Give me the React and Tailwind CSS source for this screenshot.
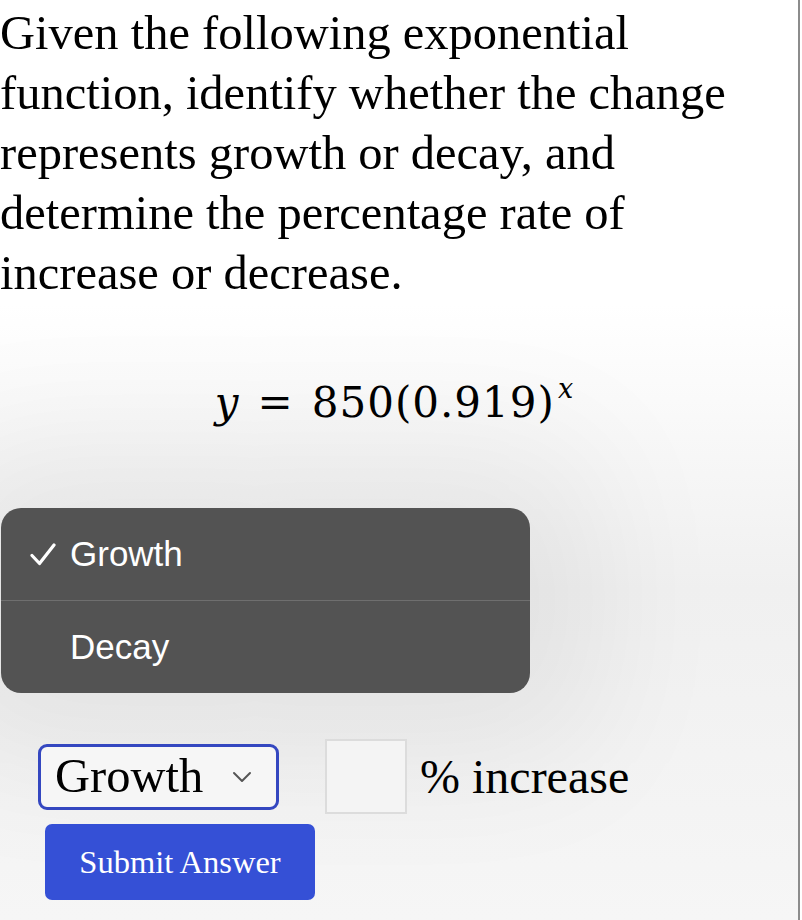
import React, { useState } from "react";

const serif = { fontFamily: '"Liberation Serif", "Times New Roman", serif' };
const math = { fontFamily: '"DejaVu Serif", "Liberation Serif", serif' };

const Check = () => (
    <svg width="26" height="23" viewBox="0 0 26 23" fill="none">
        <path
            d="M2 12.5 L9.5 20.5 L24 2"
            stroke="white"
            strokeWidth="3.2"
            strokeLinecap="round"
            strokeLinejoin="round"
        />
    </svg>
);

export default function App() {
    const [answer, setAnswer] = useState("Growth");
    const [rate, setRate] = useState("");

    const options = ["Growth", "Decay"];

    return (
        <div className="w-[802px] h-[920px] overflow-hidden bg-white">
            <div className="w-[800px] h-[920px] border-r-2 border-[#8c8c8c] bg-[linear-gradient(180deg,#ffffff_0%,#ffffff_33%,#f0f0f0_64%,#f6f6f6_100%)]">
                <p
                    className="m-0 pt-[3px] text-[48.5px] leading-[60px] text-black"
                    style={serif}
                >
                    Given the following exponential
                    <br />
                    function, identify whether the change
                    <br />
                    represents growth or decay, and
                    <br />
                    determine the percentage rate of
                    <br />
                    increase or decrease.
                </p>

                <div
                    className="mt-[70px] flex justify-center items-baseline text-[42px] leading-[60px] text-black pr-[10px]"
                    style={math}
                >
                    <span className="italic">y</span>
                    <span className="mx-[19px]">=</span>
                    <span className="tracking-[1px]">850(0.919)</span>
                    <span className="italic text-[27px] relative -top-[19px] ml-[3px]">x</span>
                </div>

                <div
                    className="mt-[70px] ml-[1px] w-[529px] rounded-[20px] bg-[#535353] text-white text-[35px] shadow-[0_0_140px_70px_rgba(0,0,0,0.06)]"
                    style={{ fontFamily: '"Liberation Sans", Arial, sans-serif' }}
                >
                    {options.map((opt, idx) => (
                        <button
                            key={opt}
                            onClick={() => setAnswer(opt)}
                            className={
                                "flex items-center w-full text-left " +
                                (idx == 0 ? "h-[93px] border-b border-[#6f6f6f]" : "h-[92px]")
                            }
                        >
                            <span className="w-[69px] flex justify-end pr-[14px]">
                                {answer == opt && <Check />}
                            </span>
                            {opt}
                        </button>
                    ))}
                </div>

                <div className="mt-[46px] ml-[38px] flex items-center" style={serif}>
                    <div className="flex items-center justify-between w-[241px] h-[66px] rounded-[9px] border-[3px] border-[#3447c0] bg-[#f6f6f6] pl-[14px] pr-[24px]">
                        <span className="text-[48.5px] leading-none text-black">{answer}</span>
                        <svg width="20" height="12" viewBox="0 0 20 12" fill="none">
                            <path
                                d="M2 2 L10 10 L18 2"
                                stroke="#555"
                                strokeWidth="2"
                                strokeLinecap="round"
                                strokeLinejoin="round"
                            />
                        </svg>
                    </div>
                    <input
                        value={rate}
                        onChange={(e) => setRate(e.target.value)}
                        className="ml-[46px] w-[82px] h-[75px] border-2 border-[#dcdcdc] bg-[#f4f4f4] outline-none text-[40px] text-center"
                    />
                    <span className="ml-[13px] text-[48px] text-black leading-none">
                        % {answer == "Growth" ? "increase" : "decrease"}
                    </span>
                </div>

                <button
                    className="block mt-[10px] ml-[45px] w-[270px] h-[76px] rounded-[7px] bg-[#3550d6] text-white text-[32.5px]"
                    style={serif}
                >
                    Submit Answer
                </button>
            </div>
        </div>
    );
}
